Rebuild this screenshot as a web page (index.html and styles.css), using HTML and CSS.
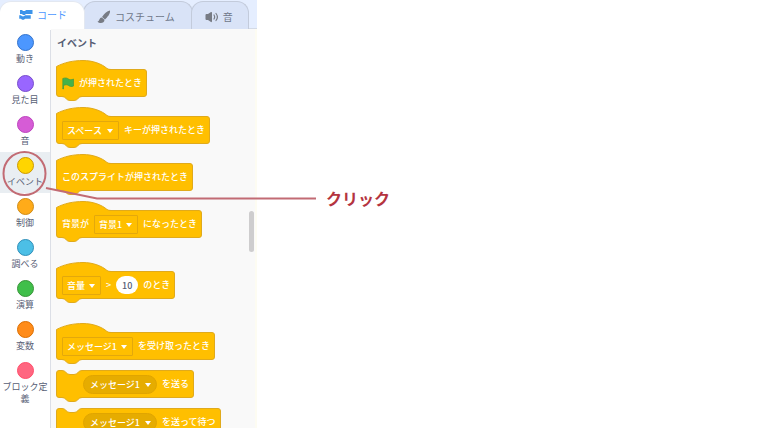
FILE: index.html
```
<!DOCTYPE html>
<html lang="ja">
<head>
  <meta charset="UTF-8">
  <meta name="viewport" content="width=device-width, initial-scale=1.0">
  <title>イベント</title>
  <link rel="stylesheet" href="styles.css">
</head>
<body>
  <svg class="defs" width="0" height="0">
    <symbol id="hat" viewBox="0 0 56 10">
      <path d="M.5 10V6.500C8 2.500 17 .5 27 .5S46 4 51 8.500Q52.500 9.500 55 9.500V10Z" fill="#ffbf00"/>
      <path d="M.5 10V6.500C8 2.500 17 .5 27 .5S46 4 51 8.500Q52.500 9.500 55 9.500" fill="none" stroke="#e0aa1c"/>
    </symbol>
    <symbol id="foot" viewBox="0 0 20 5">
      <path d="M0 0H20V.5Q17.500 .5 16 2.500T12 4.500H8Q5.500 4.500 4 2.500T0 .5Z" fill="#ffbf00"/>
      <path d="M0 .5Q2.500 .5 4 2.500T8 4.500H12Q14.500 4.500 16 2.500T20 .5" fill="none" stroke="#e0aa1c"/>
    </symbol>
    <symbol id="notch" viewBox="0 0 20 5">
      <path d="M0 0H20V.5Q17.500 .5 16 2.500T12 4.500H8Q5.500 4.500 4 2.500T0 .5Z" fill="#f9f9f9"/>
      <path d="M0 .5Q2.500 .5 4 2.500T8 4.500H12Q14.500 4.500 16 2.500T20 .5" fill="none" stroke="#e0aa1c"/>
    </symbol>
  </svg>

  <div class="editor">
    <nav class="tabs">
      <button class="tab active">
        <svg width="14" height="12" viewBox="0 0 14 12"><path d="M1 1H3L4 2H6L7 1H13.500V5H7L6 6H4L3 5H1Z" fill="#3d94ea"/><path d="M0 6H2L3 7H5L6 6H12V10H6L5 11H3L2 10H0Z" fill="#3d94ea" stroke="#fff" stroke-width=".5"/></svg>
        コード
      </button>
      <button class="tab">
        <svg width="14" height="14" viewBox="0 0 14 14"><path d="M13 .5C10 1 7 4 5 7L8 9.500C10.500 7 13.500 3.500 13 .5Z" fill="#777b84"/><path d="M4.800 7.500C2 7.500 3 11 .5 11.500C2.500 14 7.500 13.500 7.500 9.800Z" fill="#777b84"/></svg>
        コスチューム
      </button>
      <button class="tab">
        <svg width="14" height="12" viewBox="0 0 14 12"><path d="M.5 4Q.5 3 1.500 3H3L6 1Q7 .5 7 2V10Q7 11.500 6 11L3 9H1.500Q.5 9 .5 8Z" fill="#777b84"/><path d="M9 4Q10.300 6 9 8M11 2.500Q13.800 6 11 9.500" fill="none" stroke="#777b84" stroke-width="1.200" stroke-linecap="round"/></svg>
        音
      </button>
    </nav>

    <div class="workspace">
      <ul class="categories">
        <li><a href="#motion"><i class="dot motion"></i>動き</a></li>
        <li><a href="#looks"><i class="dot looks"></i>見た目</a></li>
        <li><a href="#sound"><i class="dot sound"></i>音</a></li>
        <li><a href="#events" class="selected"><i class="dot events"></i>イベント</a></li>
        <li><a href="#control"><i class="dot control"></i>制御</a></li>
        <li><a href="#sensing"><i class="dot sensing"></i>調べる</a></li>
        <li><a href="#operators"><i class="dot operators"></i>演算</a></li>
        <li><a href="#variables"><i class="dot variables"></i>変数</a></li>
        <li><a href="#myblocks"><i class="dot myblocks"></i>ブロック定義</a></li>
      </ul>

      <main class="palette" id="events">
        <h2>イベント</h2>

        <div class="group">
          <div class="block">
            <svg class="hat"><use href="#hat"/></svg>
            <div class="body">
              <svg class="flag" width="12" height="13" viewBox="0 0 12 13"><path d="M.8 12V1.500C3.500 .5 5 1 6.500 2S9.500 3 11.500 2V9C9.500 10 8 9.500 6.500 8.500S3.500 7.500 1.500 8.500V12Z" fill="#45b24a" stroke="#45993d" stroke-width=".7" stroke-linejoin="round"/></svg>
              <span>が押されたとき</span>
            </div>
            <svg class="foot"><use href="#foot"/></svg>
          </div>

          <div class="block">
            <svg class="hat"><use href="#hat"/></svg>
            <div class="body">
              <span class="drop"><select aria-label="キー"><option>スペース</option></select></span>
              <span>キーが押されたとき</span>
            </div>
            <svg class="foot"><use href="#foot"/></svg>
          </div>

          <div class="block">
            <svg class="hat"><use href="#hat"/></svg>
            <div class="body"><span>このスプライトが押されたとき</span></div>
            <svg class="foot"><use href="#foot"/></svg>
          </div>

          <div class="block">
            <svg class="hat"><use href="#hat"/></svg>
            <div class="body">
              <span>背景が</span>
              <span class="drop"><select aria-label="背景"><option>背景1</option></select></span>
              <span>になったとき</span>
            </div>
            <svg class="foot"><use href="#foot"/></svg>
          </div>
        </div>

        <div class="group">
          <div class="block">
            <svg class="hat"><use href="#hat"/></svg>
            <div class="body">
              <span class="drop"><select aria-label="センサー"><option>音量</option></select></span>
              <span>&gt;</span>
              <input type="text" value="10" aria-label="しきい値">
              <span>のとき</span>
            </div>
            <svg class="foot"><use href="#foot"/></svg>
          </div>
        </div>

        <div class="group">
          <div class="block">
            <svg class="hat"><use href="#hat"/></svg>
            <div class="body">
              <span class="drop"><select aria-label="受け取るメッセージ"><option>メッセージ1</option></select></span>
              <span>を受け取ったとき</span>
            </div>
            <svg class="foot"><use href="#foot"/></svg>
          </div>

          <div class="block stack">
            <svg class="notch"><use href="#notch"/></svg>
            <div class="body">
              <span class="drop round"><select aria-label="送るメッセージ"><option>メッセージ1</option></select></span>
              <span>を送る</span>
            </div>
            <svg class="foot"><use href="#foot"/></svg>
          </div>

          <div class="block stack">
            <svg class="notch"><use href="#notch"/></svg>
            <div class="body">
              <span class="drop round"><select aria-label="送って待つメッセージ"><option>メッセージ1</option></select></span>
              <span>を送って待つ</span>
            </div>
            <svg class="foot"><use href="#foot"/></svg>
          </div>
        </div>

        <div class="scrollbar"></div>
      </main>
    </div>
  </div>

  <div class="callout">
    <svg width="318" height="50" viewBox="0 0 318 50">
      <ellipse cx="24.500" cy="23.500" rx="21" ry="21.500"/>
      <path d="M46 38L97 48.500H316"/>
    </svg>
    <strong>クリック</strong>
  </div>
</body>
</html>
```

FILE: styles.css
```
*, *::before, *::after { box-sizing: border-box; margin: 0; padding: 0; }
body { font-family: "Noto Sans CJK JP", sans-serif; background: #fff; color: #575e75; height: 100vh; overflow: hidden; position: relative; }
button, select, input { font-family: inherit; border: none; }
.defs { position: absolute; }

.editor { width: 257px; height: 100%; display: flex; flex-direction: column; overflow: hidden; }

/* tabs */
.tabs { display: flex; height: 29px; flex-shrink: 0; padding-top: 1px; background: #e5eeff; border-bottom: 1px solid #d3dae6; }
.tab { display: flex; align-items: center; gap: 4px; height: 28px; padding: 2px 17px 0 13px; margin-left: -2px; font-size: 10px; line-height: 16px; white-space: nowrap; color: #6f7789; background: #d9e3f7; border: 1px solid #c3cbdb; border-bottom: none; border-radius: 12px 12px 0 0; cursor: pointer; }
.tab:last-child { padding-right: 15px; }
.tab.active { position: relative; height: 29px; margin-left: -1px; padding: 0 17px 2px 19px; color: #4d97ff; background: #fff; border-color: #e3e8f1; }

.workspace { flex: 1; display: flex; min-height: 0; }

/* categories */
.categories { width: 51px; flex-shrink: 0; list-style: none; border-right: 1px solid #dcdfe6; background: #fff; }
.categories a { display: flex; flex-direction: column; align-items: center; gap: 2px; min-height: 41px; padding: 5px 2px 4px; font-size: 9px; line-height: 12px; text-align: center; color: #575e75; text-decoration: none; }
.categories .selected { background: #e9eef2; }
.dot { width: 17px; height: 17px; flex-shrink: 0; border-radius: 50%; border: 1px solid; }
.motion { background: #4c97ff; border-color: #3373cc; }
.looks { background: #9966ff; border-color: #774dcb; }
.sound { background: #d65cd6; border-color: #bd42bd; }
.events { background: #ffd500; border-color: #cc9900; }
.control { background: #ffab19; border-color: #cf8b17; }
.sensing { background: #4cbfe6; border-color: #2e8eb8; }
.operators { background: #40bf4a; border-color: #389438; }
.variables { background: #ff8c1a; border-color: #db6e00; }
.myblocks { background: #ff6680; border-color: #ff4d6a; }

/* block palette */
.palette { flex: 1; position: relative; overflow: hidden; padding: 6px 0 0 5px; background: #f9f9f9; border-right: 2px solid #fdfcf2; display: flex; flex-direction: column; gap: 20px; }
.palette h2 { font-size: 10px; line-height: 16px; margin-bottom: -11px; padding-left: 1px; }
.group { display: flex; flex-direction: column; align-items: flex-start; gap: 6px; flex-shrink: 0; }
.block { position: relative; display: flex; flex-direction: column; align-items: flex-start; color: #fff; font-size: 9px; font-weight: 500; line-height: 14px; white-space: nowrap; }
.block > svg { position: relative; display: block; }
.hat { width: 56px; height: 10px; margin-bottom: -1px; }
.foot { width: 20px; height: 5px; margin: -1px 0 0 6px; }
.body { display: flex; align-items: center; gap: 5px; height: 28px; padding: 0 4px 0 5px; background: #ffbf00; border: 1px solid #e0aa1c; border-radius: 0 3px 3px 3px; }
.stack .body { padding-left: 26px; border-radius: 3px; }
.stack .notch { position: absolute; top: 0; left: 6px; width: 20px; height: 5px; }

.drop { position: relative; display: flex; }
.drop select { appearance: none; height: 19px; padding: 0 14px 0 4px; font-size: 9px; font-weight: 500; color: #fff; background: #ffbf00; border: 1px solid #e3a80c; border-radius: 1px; }
.drop::after { content: ""; position: absolute; right: 6px; top: 8px; border: 3px solid transparent; border-top: 4px solid #fff; border-bottom: none; pointer-events: none; }
.drop.round select { background: #e6ac00; border-color: #e0a500; border-radius: 10px; padding: 0 15px 0 6px; }
.body input { width: 22px; height: 18px; border-radius: 9px; background: #fff; color: #575e75; font-size: 9px; font-weight: 500; text-align: center; }

.scrollbar { position: absolute; top: 182px; right: 1px; width: 5px; height: 41px; border-radius: 3px; background: #cecdce; }

/* annotation laid over the editor */
.callout { position: absolute; top: 150px; left: 0; display: flex; align-items: flex-end; gap: 8px; pointer-events: none; }
.callout svg { fill: none; stroke: #c26b74; stroke-width: 2px; }
.callout strong { font-size: 16px; line-height: 24px; color: #b4343f; margin-bottom: -10px; }
```
